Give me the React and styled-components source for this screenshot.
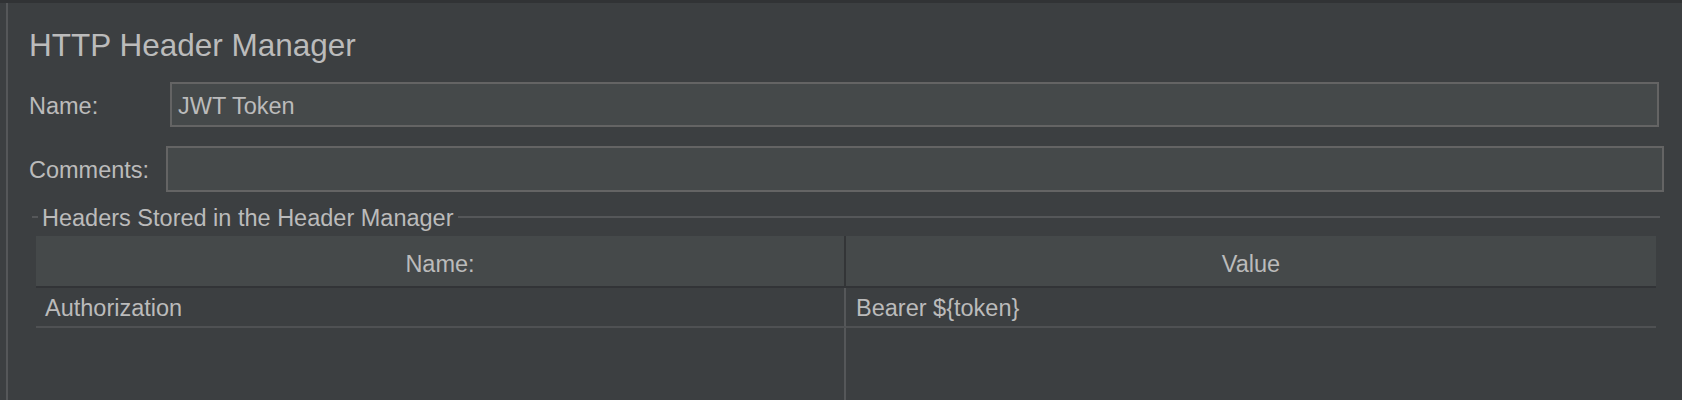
import React from "react";
import styled, { createGlobalStyle } from "styled-components";

const Global = createGlobalStyle`
  html, body {
    margin: 0;
    padding: 0;
    background: #3c3f41;
  }
  body {
    font-family: "Liberation Sans", Arial, sans-serif;
    color: #bbbbbb;
    overflow: hidden;
  }
`;

const Page = styled.div`
  display: flex;
  flex-direction: column;
  width: 1682px;
  height: 400px;
  background: #3c3f41;
`;

const TopStrip = styled.div`
  height: 3px;
  background: #313335;
  flex: none;
`;

const Main = styled.div`
  flex: 1;
  display: flex;
  padding-left: 6px;
  min-height: 0;
`;

const Content = styled.div`
  flex: 1;
  display: flex;
  flex-direction: column;
  border-left: 2px solid #555759;
  padding: 23px 18px 0 21px;
  min-width: 0;
`;

const Title = styled.h1`
  margin: 0;
  font-weight: 400;
  font-size: 31.5px;
  line-height: 38px;
  color: #bbbbbb;
`;

const FieldRow = styled.div`
  display: flex;
  align-items: center;
  margin-top: ${(p) => p.$top}px;
  margin-right: ${(p) => p.$right}px;
`;

const Label = styled.label`
  flex: none;
  width: ${(p) => p.$width}px;
  font-size: 23.5px;
  line-height: 28px;
  padding-top: 2px;
  color: #bbbbbb;
`;

const Input = styled.input`
  flex: 1;
  box-sizing: border-box;
  height: ${(p) => p.$height}px;
  background: #45494a;
  border: 2px solid #646464;
  border-radius: 0;
  padding: 3px 6px 0 6px;
  margin: 0;
  font-family: "Liberation Sans", Arial, sans-serif;
  font-size: 23.5px;
  color: #bbbbbb;
  outline: none;
`;

const Group = styled.section`
  display: flex;
  flex-direction: column;
  margin: 13px 4px 0 3px;
  flex: 1;
  min-height: 0;
`;

const GroupHeader = styled.div`
  display: flex;
  align-items: flex-start;
  height: 27px;
`;

const Dash = styled.div`
  width: 6px;
  height: 2px;
  margin-top: 11px;
  background: #555759;
  flex: none;
`;

const GroupTitle = styled.span`
  font-size: 23.5px;
  line-height: 27px;
  padding: 0 4px 0 4px;
  color: #bbbbbb;
  white-space: nowrap;
`;

const Rule = styled.div`
  flex: 1;
  height: 2px;
  margin-top: 11px;
  background: #555759;
`;

const Table = styled.div`
  margin: 4px 4px 0 4px;
  display: grid;
  grid-template-columns: 1fr 1fr;
  grid-template-rows: 52px 40px 1fr;
  flex: 1;
`;

const HeadCell = styled.div`
  background: #45494a;
  border-bottom: 2px solid #323437;
  border-right: ${(p) => (p.$divider ? "2px solid #333537" : "none")};
  text-align: center;
  font-size: 23.5px;
  line-height: 42px;
  padding-top: 7px;
  box-sizing: border-box;
  color: #bbbbbb;
`;

const Cell = styled.div`
  border-bottom: ${(p) => (p.$filler ? "none" : "2px solid #4f5153")};
  border-right: ${(p) => (p.$divider ? "2px solid #555759" : "none")};
  font-size: 23.5px;
  line-height: 36px;
  padding-top: 2px;
  padding-left: ${(p) => p.$pad}px;
  box-sizing: border-box;
  color: #bbbbbb;
  white-space: nowrap;
`;

const headers = [
  { name: "Authorization", value: "Bearer ${token}" },
];

export default function App() {
  return (
    <Page>
      <Global />
      <TopStrip />
      <Main>
        <Content>
          <Title>HTTP Header Manager</Title>
          <FieldRow $top={18} $right={5}>
            <Label $width={141}>Name:</Label>
            <Input $height={45} defaultValue="JWT Token" />
          </FieldRow>
          <FieldRow $top={19} $right={0}>
            <Label $width={137}>Comments:</Label>
            <Input $height={46} defaultValue="" />
          </FieldRow>
          <Group>
            <GroupHeader>
              <Dash />
              <GroupTitle>Headers Stored in the Header Manager</GroupTitle>
              <Rule />
            </GroupHeader>
            <Table>
              <HeadCell $divider>Name:</HeadCell>
              <HeadCell>Value</HeadCell>
              {headers.map((h) => (
                <React.Fragment key={h.name}>
                  <Cell $divider $pad={9}>{h.name}</Cell>
                  <Cell $pad={10}>{h.value}</Cell>
                </React.Fragment>
              ))}
              <Cell $divider $filler />
              <Cell $filler />
            </Table>
          </Group>
        </Content>
      </Main>
    </Page>
  );
}
